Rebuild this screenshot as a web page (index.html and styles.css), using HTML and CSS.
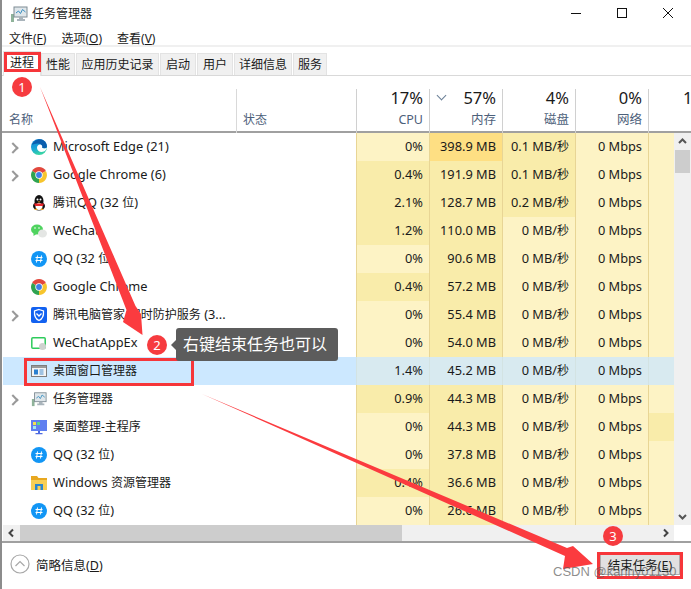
FILE: index.html
```html
<!DOCTYPE html>
<html lang="zh-CN">

<head>
  <meta charset="UTF-8">
  <meta name="viewport" content="width=device-width, initial-scale=1.0">
  <title>任务管理器</title>
  <link rel="stylesheet" href="styles.css">
</head>

<body>
  <svg class="defs" width="0" height="0">
    <defs>
      <linearGradient id="edge-g" x1="0" y1="0" x2="0.3" y2="1">
        <stop offset="0" stop-color="#0f7fcf" />
        <stop offset="0.6" stop-color="#1aa5d8" />
        <stop offset="1" stop-color="#36d3a6" />
      </linearGradient>
    </defs>
    <symbol id="i-task" viewBox="0 0 18 18">
      <rect x="1" y="9" width="3" height="8" fill="#8fb39a" />
      <rect x="4" y="2" width="13" height="10" fill="#dfe6ea" stroke="#7f8c94" />
      <path d="M6 8l2.500-2 2 2.500 2-4 3 2.500" fill="none" stroke="#3a8fc0" />
      <path d="M9 12h4v2h2v2H7v-2h2z" fill="#a9b4bb" />
    </symbol>
    <symbol id="i-qq" viewBox="0 0 16 16">
      <circle cx="8" cy="8" r="8" fill="#1296f5" />
      <path d="M6.500 4.500L5.500 11.500M10.500 4.500L9.500 11.500M4.500 6.500H11.500M4.500 9.500H11.500" stroke="#fff" stroke-width="1" fill="none" />
    </symbol>
    <symbol id="i-chrome" viewBox="0 0 16 16">
      <path d="M8 8L1.100 4A8 8 0 0 1 14.900 4z" fill="#e2483d" />
      <path d="M8 8L14.900 4A8 8 0 0 1 8 16z" fill="#f7c52d" />
      <path d="M8 8L8 16A8 8 0 0 1 1.100 4z" fill="#2fa350" />
      <circle cx="8" cy="8" r="3.700" fill="#fff" />
      <circle cx="8" cy="8" r="2.900" fill="#3f7fe8" />
    </symbol>
  </svg>

  <div class="window">
    <div class="titlebar">
      <svg class="app-icon" width="18" height="18">
        <use href="#i-task" />
      </svg>
      <span class="title">任务管理器</span>
      <div class="win-buttons">
        <svg width="12" height="12" viewBox="0 0 12 12">
          <path d="M1 6.500H11" stroke="#111" />
        </svg>
        <svg width="12" height="12" viewBox="0 0 12 12">
          <rect x="1.500" y="1.500" width="9" height="9" fill="none" stroke="#111" />
        </svg>
        <svg width="12" height="12" viewBox="0 0 12 12">
          <path d="M1 1L11 11M11 1L1 11" stroke="#111" />
        </svg>
      </div>
    </div>

    <div class="menubar">
      <span>文件(<u>F</u>)</span>
      <span>选项(<u>O</u>)</span>
      <span>查看(<u>V</u>)</span>
    </div>

    <div class="tabs">
      <span class="tab active">进程</span>
      <span class="tab w34">性能</span>
      <span class="tab w84">应用历史记录</span>
      <span class="tab w36">启动</span>
      <span class="tab w36">用户</span>
      <span class="tab w59">详细信息</span>
      <span class="tab w34">服务</span>
    </div>

    <div class="table">
      <div class="head">
        <div class="head-name">名称</div>
        <div class="head-status">状态</div>
        <div class="head-col"><b>17%</b><small>CPU</small></div>
        <div class="head-col sorted"><b>57%</b><small>内存</small></div>
        <div class="head-col"><b>4%</b><small>磁盘</small></div>
        <div class="head-col"><b>0%</b><small>网络</small></div>
        <div class="head-col cut"><b>1</b></div>
      </div>

      <div class="body">
        <div class="rows">
          <div class="row">
            <div class="name"><span class="chev open"></span>
              <svg class="ico" viewBox="0 0 16 16">
                <circle cx="8" cy="8" r="8" fill="url(#edge-g)" />
                <path d="M1 6C2.500 1.500 8 -1 12 1c2.500 1.300 4 4 4 7-1 1.500-3.500 1.500-5 .5C11 6 9 4.500 6.500 4.500 4 4.500 2 5.500 1 6z" fill="#0b5fae" />
                <path d="M6 9C6 6.500 8 5 10 5.800c1.200.5 1.500 1.800 1 3 1.500 1 3.500 1 4.800 0-.3 1.600-1.500 3.200-3 3.700C9.500 13.800 6 12 6 9z" fill="#fff" />
              </svg>
              <span>Microsoft Edge (21)</span>
            </div>
            <div class="num c1">0%</div>
            <div class="num c3">398.9 MB</div>
            <div class="num c2">0.1 MB/<i class="zh">秒</i></div>
            <div class="num c1">0 Mbps</div>
            <div class="num c1"></div>
          </div>
          <div class="row">
            <div class="name"><span class="chev open"></span>
              <svg class="ico"><use href="#i-chrome" /></svg>
              <span>Google Chrome (6)</span>
            </div>
            <div class="num c2">0.4%</div>
            <div class="num c2">191.9 MB</div>
            <div class="num c2">0.1 MB/<i class="zh">秒</i></div>
            <div class="num c1">0 Mbps</div>
            <div class="num c1"></div>
          </div>
          <div class="row">
            <div class="name"><span class="chev"></span>
              <svg class="ico" viewBox="0 0 16 16">
                <ellipse cx="8" cy="6" rx="4.500" ry="6" fill="#111" />
                <ellipse cx="8" cy="11" rx="6" ry="4.500" fill="#111" />
                <ellipse cx="8" cy="11.500" rx="3.500" ry="3.500" fill="#fff" />
                <path d="M3 8.500h10l-1 2.500H4z" fill="#e8262a" />
                <path d="M3 15h3.500l-1-2zM13 15H9.500l1-2z" fill="#f5a623" />
                <circle cx="6.500" cy="4.500" r="1" fill="#fff" />
                <circle cx="9.500" cy="4.500" r="1" fill="#fff" />
                <path d="M6.500 6.500h3L8 7.800z" fill="#f5a623" />
              </svg>
              <span><i class="zh">腾讯</i>QQ (32 <i class="zh">位</i>)</span>
            </div>
            <div class="num c2">2.1%</div>
            <div class="num c2">128.7 MB</div>
            <div class="num c2">0.2 MB/<i class="zh">秒</i></div>
            <div class="num c1">0 Mbps</div>
            <div class="num c1"></div>
          </div>
          <div class="row">
            <div class="name"><span class="chev"></span>
              <svg class="ico" viewBox="0 0 16 16">
                <ellipse cx="6" cy="6.500" rx="6" ry="5" fill="#4fd35f" />
                <path d="M2.500 10v3l3-2z" fill="#4fd35f" />
                <ellipse cx="11.500" cy="10.500" rx="4.500" ry="4" fill="#e4e6e4" />
                <circle cx="4" cy="5" r=".8" fill="#fff" />
                <circle cx="8" cy="5" r=".8" fill="#fff" />
              </svg>
              <span>WeChat</span>
            </div>
            <div class="num c2">1.2%</div>
            <div class="num c2">110.0 MB</div>
            <div class="num c1">0 MB/<i class="zh">秒</i></div>
            <div class="num c1">0 Mbps</div>
            <div class="num c1"></div>
          </div>
          <div class="row">
            <div class="name"><span class="chev"></span>
              <svg class="ico"><use href="#i-qq" /></svg>
              <span>QQ (32 <i class="zh">位</i>)</span>
            </div>
            <div class="num c1">0%</div>
            <div class="num c2">90.6 MB</div>
            <div class="num c1">0 MB/<i class="zh">秒</i></div>
            <div class="num c1">0 Mbps</div>
            <div class="num c1"></div>
          </div>
          <div class="row">
            <div class="name"><span class="chev"></span>
              <svg class="ico"><use href="#i-chrome" /></svg>
              <span>Google Chrome</span>
            </div>
            <div class="num c2">0.4%</div>
            <div class="num c2">57.2 MB</div>
            <div class="num c1">0 MB/<i class="zh">秒</i></div>
            <div class="num c1">0 Mbps</div>
            <div class="num c1"></div>
          </div>
          <div class="row">
            <div class="name"><span class="chev open"></span>
              <svg class="ico" viewBox="0 0 16 16">
                <rect width="16" height="16" rx="2" fill="#1261f0" />
                <path d="M8 2.500l4.500 1.500c.3 4-1 8-4.500 9.500C4.500 12 3.200 8 3.500 4z" fill="none" stroke="#fff" stroke-width="1.300" />
                <path d="M5.500 6.500L8 9l2.500-2.500" fill="none" stroke="#fff" stroke-width="1.300" />
              </svg>
              <span><i class="zh">腾讯电脑管家-实时防护服务</i> (3...</span>
            </div>
            <div class="num c1">0%</div>
            <div class="num c2">55.4 MB</div>
            <div class="num c1">0 MB/<i class="zh">秒</i></div>
            <div class="num c1">0 Mbps</div>
            <div class="num c1"></div>
          </div>
          <div class="row">
            <div class="name"><span class="chev"></span>
              <svg class="ico" viewBox="0 0 16 16">
                <rect x=".8" y="2.800" width="13.400" height="10.400" rx="1" fill="#fff" stroke="#2ecb5c" stroke-width="1.500" />
                <circle cx="11.500" cy="11.500" r="3.500" fill="#cfd2cf" />
              </svg>
              <span>WeChatAppEx</span>
            </div>
            <div class="num c1">0%</div>
            <div class="num c2">54.0 MB</div>
            <div class="num c1">0 MB/<i class="zh">秒</i></div>
            <div class="num c1">0 Mbps</div>
            <div class="num c1"></div>
          </div>
          <div class="row selected">
            <div class="name"><span class="chev"></span>
              <svg class="ico" viewBox="0 0 16 16">
                <rect x=".5" y="2.500" width="15" height="11" fill="#f4f4f4" stroke="#7d7d7d" />
                <rect x="1" y="3" width="14" height="2" fill="#9a9a9a" />
                <rect x="3" y="6.500" width="4" height="5" fill="#2a7fd0" />
                <path d="M8.500 7h4M8.500 9h4M8.500 11h4" stroke="#4a90d0" />
              </svg>
              <span><i class="zh">桌面窗口管理器</i></span>
            </div>
            <div class="num">1.4%</div>
            <div class="num">45.2 MB</div>
            <div class="num">0 MB/<i class="zh">秒</i></div>
            <div class="num">0 Mbps</div>
            <div class="num"></div>
          </div>
          <div class="row">
            <div class="name"><span class="chev open"></span>
              <svg class="ico"><use href="#i-task" /></svg>
              <span><i class="zh">任务管理器</i></span>
            </div>
            <div class="num c2">0.9%</div>
            <div class="num c2">44.3 MB</div>
            <div class="num c1">0 MB/<i class="zh">秒</i></div>
            <div class="num c1">0 Mbps</div>
            <div class="num c1"></div>
          </div>
          <div class="row">
            <div class="name"><span class="chev"></span>
              <svg class="ico" viewBox="0 0 16 16">
                <rect x="0" y="1" width="16" height="11" fill="#5f7ff0" />
                <rect x="2" y="3" width="3" height="3" fill="#f4e04d" />
                <rect x="6" y="3" width="3" height="3" fill="#58d68d" />
                <rect x="2" y="7" width="3" height="3" fill="#9fe8f0" />
                <path d="M7 12h2v2h2.500v1.200h-7V14H7z" fill="#4d6ae0" />
              </svg>
              <span><i class="zh">桌面整理-主程序</i></span>
            </div>
            <div class="num c1">0%</div>
            <div class="num c2">44.3 MB</div>
            <div class="num c1">0 MB/<i class="zh">秒</i></div>
            <div class="num c1">0 Mbps</div>
            <div class="num c2"></div>
          </div>
          <div class="row">
            <div class="name"><span class="chev"></span>
              <svg class="ico"><use href="#i-qq" /></svg>
              <span>QQ (32 <i class="zh">位</i>)</span>
            </div>
            <div class="num c1">0%</div>
            <div class="num c2">37.8 MB</div>
            <div class="num c1">0 MB/<i class="zh">秒</i></div>
            <div class="num c1">0 Mbps</div>
            <div class="num c1"></div>
          </div>
          <div class="row">
            <div class="name"><span class="chev"></span>
              <svg class="ico" viewBox="0 0 16 16">
                <path d="M0 1h6l1.500 2H16v3H0z" fill="#e8a820" />
                <rect x="0" y="5" width="16" height="10" fill="#f7cf56" />
                <rect x="4" y="9" width="8" height="6" fill="#2a86d0" />
                <rect x="6.500" y="11" width="3" height="4" fill="#f7cf56" />
              </svg>
              <span>Windows <i class="zh">资源管理器</i></span>
            </div>
            <div class="num c2">0.4%</div>
            <div class="num c2">36.6 MB</div>
            <div class="num c1">0 MB/<i class="zh">秒</i></div>
            <div class="num c1">0 Mbps</div>
            <div class="num c1"></div>
          </div>
          <div class="row">
            <div class="name"><span class="chev"></span>
              <svg class="ico"><use href="#i-qq" /></svg>
              <span>QQ (32 <i class="zh">位</i>)</span>
            </div>
            <div class="num c1">0%</div>
            <div class="num c2">26.6 MB</div>
            <div class="num c1">0 MB/<i class="zh">秒</i></div>
            <div class="num c1">0 Mbps</div>
            <div class="num c1"></div>
          </div>
        </div>

        <div class="vscroll">
          <svg width="17" height="17" viewBox="0 0 17 17">
            <path d="M5 10l3.500-3.500L12 10" fill="none" stroke="#555" stroke-width="2" />
          </svg>
          <div class="vtrack">
            <div class="vthumb"></div>
          </div>
          <svg width="17" height="17" viewBox="0 0 17 17">
            <path d="M5 7l3.500 3.500L12 7" fill="none" stroke="#555" stroke-width="2" />
          </svg>
        </div>
      </div>

      <div class="hscroll">
        <svg width="17" height="16" viewBox="0 0 17 16">
          <path d="M10 4.500L6.500 8l3.500 3.500" fill="none" stroke="#444" stroke-width="2" />
        </svg>
        <div class="hthumb"></div>
        <svg width="17" height="16" viewBox="0 0 17 16">
          <path d="M7 4.500L10.500 8 7 11.500" fill="none" stroke="#444" stroke-width="2" />
        </svg>
      </div>
    </div>

    <div class="footer">
      <div class="less">
        <svg width="20" height="20" viewBox="0 0 20 20">
          <circle cx="10" cy="10" r="9" fill="none" stroke="#a8a8a8" stroke-width="1.200" />
          <path d="M5.500 12L10 7.500l4.500 4.500" fill="none" stroke="#a8a8a8" stroke-width="1.200" />
        </svg>
        <span>简略信息(<u>D</u>)</span>
      </div>
      <button class="end-task">结束任务(<u>E</u>)</button>
    </div>
  </div>

  <!-- 标注层 -->
  <svg class="arrows" width="691" height="589" viewBox="0 0 691 589">
    <path d="M40 87L135.500 306L141 314L142.500 335L123 322L126.500 310z" fill="#fb3b3f" />
    <path d="M202 394L567 548L573 546L593 564L563 569L565 556z" fill="#fb3b3f" />
  </svg>
  <div class="red-box box-tab"></div>
  <div class="red-box box-row"></div>
  <div class="red-box box-btn"></div>
  <div class="badge b1">1</div>
  <div class="badge b2">2</div>
  <div class="badge b3">3</div>
  <div class="tip">右键结束任务也可以</div>
  <div class="watermark">CSDN @kanny01130</div>
</body>

</html>
```

FILE: styles.css
```css
* {
  margin: 0;
  padding: 0;
  box-sizing: border-box;
}

body {
  width: 691px;
  height: 589px;
  overflow: hidden;
  background: #fff;
  position: relative;
  font-family: "Noto Sans", "Noto Sans CJK SC", sans-serif;
  font-size: 12.800px;
  color: #1a1a1a;
}

u {
  text-decoration: underline;
}

.zh {
  font-style: normal;
  font-size: 12px;
}

.defs {
  position: absolute;
}

.window {
  height: 589px;
  display: flex;
  flex-direction: column;
  border-left: 2px solid #8c8c8c;
}

.titlebar {
  height: 28px;
  display: flex;
  align-items: center;
  padding: 0 0 2px 8px;
  flex-shrink: 0;
}

.app-icon {
  width: 18px;
  height: 18px;
  margin: 2px 4px 0 0;
}

.title {
  font-size: 12px;
}

.win-buttons {
  margin-left: auto;
  display: flex;
  gap: 34px;
  padding-right: 17px;
}

.menubar {
  height: 19px;
  display: flex;
  gap: 15px;
  align-items: center;
  padding: 2px 0 0 7px;
  flex-shrink: 0;
  border-bottom: 2px solid #f0f0f0;
  font-size: 12px;
}

.tabs {
  height: 29px;
  padding: 6px 0 0 1px;
  display: flex;
  gap: 1px;
  border-bottom: 1px solid #d9d9d9;
  flex-shrink: 0;
}

.tab {
  width: 34px;
  background: #f0f0f0;
  border: 1px solid #e3e3e3;
  border-bottom: 0;
  text-align: center;
  line-height: 22px;
  font-size: 12px;
}

.tab.active {
  width: 38px;
  background: #fff;
  margin-top: -2px;
  height: 25px;
  line-height: 21px;
  margin-right: -1px;
}

.w84 {
  width: 83px;
}

.w36 {
  width: 36px;
}

.w59 {
  width: 58px;
}

.table {
  flex: 1;
  display: flex;
  flex-direction: column;
  min-height: 0;
  border-bottom: 2px solid #a0a0a0;
}

.head {
  height: 57px;
  display: grid;
  grid-template-columns: 234px 120px repeat(4, 73px) 43px;
  border-bottom: 2px solid #a0a0a0;
  flex-shrink: 0;
  padding-top: 13px;
}

.head-name,
.head-status {
  font-size: 12px;
  color: #4c607a;
  align-self: end;
  padding: 0 0 5px 7px;
}

.head-status {
  border-left: 1px solid #d9d9d9;
  height: 44px;
  display: flex;
  align-items: flex-end;
  padding-left: 6px;
}

.head-name {
  padding-left: 7px;
}

.head-col {
  border-left: 1px solid #d0d0d0;
  text-align: right;
  padding-right: 6px;
  position: relative;
  height: 44px;
}

.head-col b {
  display: block;
  font-weight: 400;
  font-size: 16.500px;
  line-height: 18px;
  color: #1a1a1a;
}

.head-col small {
  display: block;
  font-size: 12.500px;
  line-height: 20px;
  margin-top: 3px;
  color: #4c607a;
}

.head-col.cut {
  text-align: left;
  padding-left: 34px;
}

.sorted::before {
  content: "";
  position: absolute;
  left: 8px;
  top: 3px;
  width: 6px;
  height: 6px;
  border-right: 1px solid #6a7f96;
  border-bottom: 1px solid #6a7f96;
  transform: rotate(45deg);
}

.body {
  flex: 1;
  min-height: 0;
  display: flex;
  overflow: hidden;
}

.rows {
  flex: 1;
  overflow: hidden;
  margin-left: 1px;
}

.row {
  height: 28px;
  display: grid;
  grid-template-columns: 353px repeat(4, 73px) 26px;
}

.name {
  display: flex;
  align-items: center;
  white-space: nowrap;
}

.name > span:last-child {
  padding-bottom: 2px;
}

.chev {
  width: 28px;
  height: 12px;
  flex-shrink: 0;
}

.chev.open::before {
  content: "";
  display: block;
  width: 6px;
  height: 6px;
  margin: 3px 0 0 6px;
  border-top: 2px solid #999;
  border-right: 2px solid #999;
  transform: rotate(45deg);
}

.ico {
  width: 16px;
  height: 16px;
  margin-right: 6px;
  flex-shrink: 0;
}

.num {
  text-align: right;
  line-height: 26px;
  padding-right: 6px;
  border-left: 1px solid #e8d595;
  white-space: nowrap;
}

.c1 {
  background: #fdf3c5;
}

.c2 {
  background: #f9ecaa;
}

.c3 {
  background: #fedf83;
}

.selected {
  background: #cce8ff;
}

.selected .num {
  background: #d8eaf0;
  border-left-color: #d3e3e3;
}

.vscroll {
  width: 17px;
  flex-shrink: 0;
  background: #f0f0f0;
  display: flex;
  flex-direction: column;
}

.vtrack {
  flex: 1;
  padding: 0 1px;
}

.vthumb {
  height: 23px;
  background: #cdcdcd;
}

.hscroll {
  height: 16px;
  display: flex;
  background: #f0f0f0;
  margin-right: 17px;
  margin-left: 1px;
  flex-shrink: 0;
}

.hthumb {
  width: 382px;
  background: #cdcdcd;
}

.hscroll svg:last-child {
  margin-left: auto;
}

.footer {
  height: 46px;
  display: flex;
  align-items: center;
  justify-content: space-between;
  padding: 0 9px 4px 8px;
  flex-shrink: 0;
}

.less {
  display: flex;
  align-items: center;
  gap: 6px;
  font-size: 12.500px;
}

.end-task {
  width: 80px;
  height: 21px;
  background: #e1e1e1;
  border: 1px solid #adadad;
  font: inherit;
  font-size: 12.500px;
  color: #1a1a1a;
  margin-right: 2px;
}

.arrows {
  position: absolute;
  left: 0;
  top: 0;
}

.red-box {
  position: absolute;
  border: 3px solid #f6363a;
}

.box-tab {
  left: 4px;
  top: 52px;
  width: 37px;
  height: 20px;
}

.box-row {
  left: 24px;
  top: 358px;
  width: 170px;
  height: 28px;
}

.box-btn {
  left: 597px;
  top: 552px;
  width: 86px;
  height: 27px;
}

.badge {
  position: absolute;
  width: 20px;
  height: 20px;
  border-radius: 50%;
  background: #f63b3f;
  color: #fff;
  text-align: center;
  font-size: 13px;
  line-height: 20px;
}

.b1 {
  left: 12px;
  top: 77px;
}

.b2 {
  left: 147px;
  top: 335px;
}

.b3 {
  left: 603px;
  top: 526px;
}

.tip {
  position: absolute;
  left: 176px;
  top: 328px;
  width: 162px;
  height: 33px;
  line-height: 33px;
  text-align: center;
  padding-right: 4px;
  background: #5c5c5c;
  color: #fff;
  font-size: 16px;
  border-radius: 3px;
}

.tip::before {
  content: "";
  position: absolute;
  left: -5px;
  top: 12px;
  border-top: 5px solid transparent;
  border-bottom: 5px solid transparent;
  border-right: 5px solid #5c5c5c;
}

.watermark {
  position: absolute;
  left: 553px;
  top: 564px;
  font-family: "Liberation Sans", sans-serif;
  font-size: 13px;
  color: rgba(90, 90, 90, 0.7);
  white-space: nowrap;
}
```
